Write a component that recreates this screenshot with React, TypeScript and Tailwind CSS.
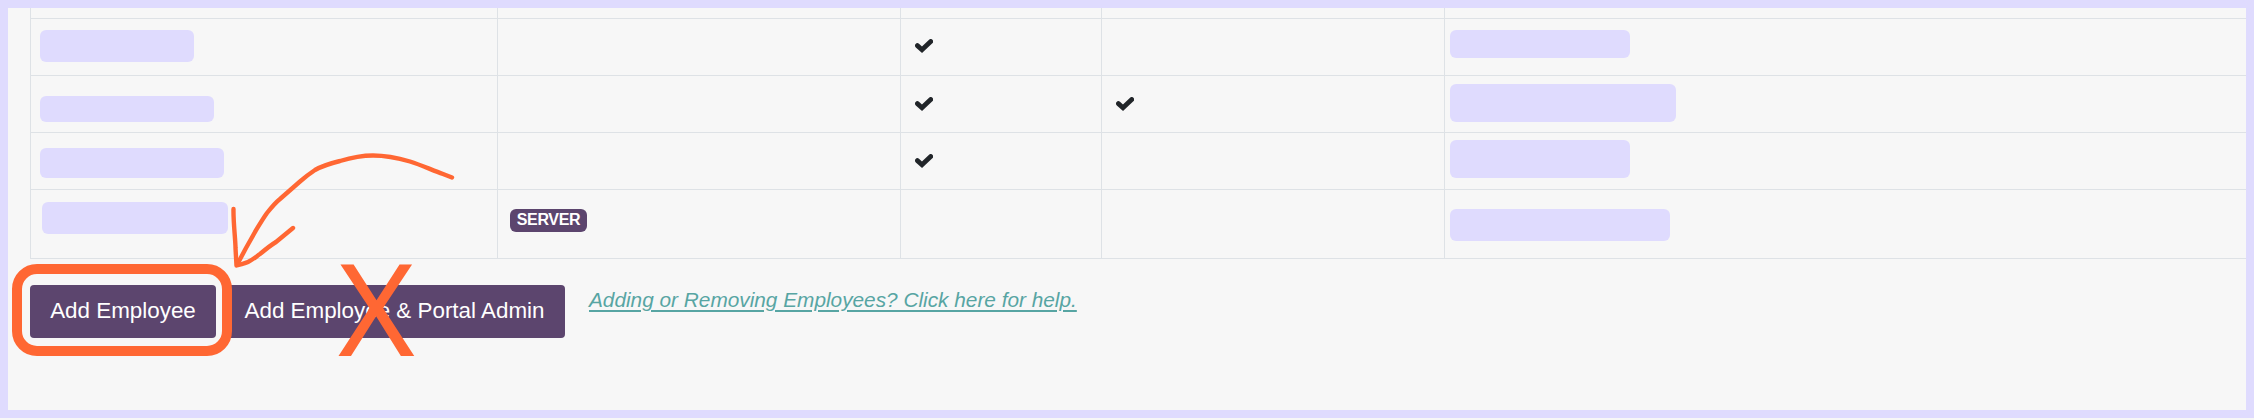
import type { ReactNode } from "react";

type Row = {
  height: string;
  name: string;
  role?: string;
  first?: boolean;
  firstPad?: string;
  second?: boolean;
  contact: string;
};

const rows: Row[] = [
  { height: "h-[57px]", name: "mt-[11px] ml-[9px] h-8 w-[154px]", first: true, firstPad: "pt-5", contact: "mt-[11px] h-7 w-[180px]" },
  { height: "h-[57px]", name: "mt-5 ml-[9px] h-[26px] w-[174px]", first: true, firstPad: "pt-[21px]", second: true, contact: "mt-2 h-[38px] w-[226px]" },
  { height: "h-[57px]", name: "mt-[15px] ml-[9px] h-[30px] w-[184px]", first: true, firstPad: "pt-[21px]", contact: "mt-[7px] h-[38px] w-[180px]" },
  { height: "h-[69px]", name: "mt-3 ml-[11px] h-8 w-[186px]", role: "SERVER", contact: "mt-[19px] h-8 w-[220px]" },
];

function Check() {
  return (
    <svg className="block h-[14px] w-[18px]" viewBox="0 0 18 14" fill="none" stroke="#212529" strokeWidth="4.8">
      <path d="M2.4 6.600 7 10.700 15.700 2.500" strokeLinecap="round" strokeLinejoin="miter" />
    </svg>
  );
}

function Cell({ children, className = "" }: { children?: ReactNode; className?: string }) {
  return <div className={`border-l border-[#dee2e6] ${className}`}>{children}</div>;
}

const columns = "grid grid-cols-[467px_403px_201px_343px_1fr] border-b border-[#dee2e6]";

export default function App() {
  return (
    <div className="h-[420px] w-[2254px] overflow-hidden bg-[#f7f7f7] font-['Liberation_Sans',Arial,sans-serif]">
      <div className="relative h-[418px] border-8 border-[#dfdbfe] pl-[22px]">
        <div className={`${columns} h-[11px]`}>
          <Cell />
          <Cell />
          <Cell />
          <Cell />
          <Cell />
        </div>
        {rows.map((row, i) => (
          <div key={i} className={`${columns} ${row.height}`}>
            <Cell>
              <div className={`rounded-md bg-[#dfdbfe] ${row.name}`} />
            </Cell>
            <Cell className="pt-[19px] pl-3">
              {row.role && (
                <div className="flex h-[23px] w-[77px] items-center justify-center rounded-md bg-[#5c456e] text-[16px] leading-none font-bold tracking-[-0.35px] text-white">
                  <span className="-mt-0.5">{row.role}</span>
                </div>
              )}
            </Cell>
            <Cell className={`pl-[14px] ${row.firstPad ?? ""}`}>{row.first && <Check />}</Cell>
            <Cell className="pt-[21px] pl-[14px]">{row.second && <Check />}</Cell>
            <Cell>
              <div className={`ml-[5px] rounded-md bg-[#dfdbfe] ${row.contact}`} />
            </Cell>
          </div>
        ))}

        <div className="mt-[26px] flex items-start">
          <button className="h-[53px] w-[186px] rounded-[4px] bg-[#5c456e] pb-0.5 text-[22.4px] leading-[51px] whitespace-nowrap text-white">
            Add Employee
          </button>
          <button className="ml-2 h-[53px] w-[341px] rounded-[4px] bg-[#5c456e] pb-0.5 text-[22.4px] leading-[51px] whitespace-nowrap text-white">
            Add Employee &amp; Portal Admin
          </button>
          <a
            href="#help"
            className="mt-px ml-6 text-[20.8px] leading-7 whitespace-nowrap text-[#57a5a3] italic underline decoration-2 underline-offset-[3px]"
          >
            Adding or Removing Employees? Click here for help.
          </a>
        </div>

        <div className="absolute top-[256px] left-1 h-[92px] w-[220px] rounded-[25px] border-10 border-[#ff6733]" />
        <span className="absolute top-[253px] left-[331px] flex h-[92px] w-[75px] scale-x-[1.02] items-center justify-center font-['Noto_Sans',sans-serif] text-[128.5px] leading-none text-[#ff6733]">
          X
        </span>
        <svg
          className="absolute top-[142px] left-[222px] h-[128px] w-[240px]"
          viewBox="230 150 240 128"
          fill="none"
          stroke="#ff6733"
          strokeWidth="4.4"
          strokeLinecap="round"
          strokeLinejoin="round"
        >
          <path d="M452 177.500L443 174C432 170 421 165 410 161.500C398 158 385 155.500 373 155.500C362 155.500 350 158 340 161C330 163.500 322 166 315 170C309 174 304 178 300 181.500L280 199C275 203 271 208 267 213C262 220 258 227 255 232L246 248L238 263" />
          <path d="M233.500 209C233.200 222 235.500 240 235.500 248L236.500 265.500C241 264 245 263.500 248 262C253 259.500 257 256 260 254C266 249 271 245 276 242L293 228" />
        </svg>
      </div>
    </div>
  );
}
